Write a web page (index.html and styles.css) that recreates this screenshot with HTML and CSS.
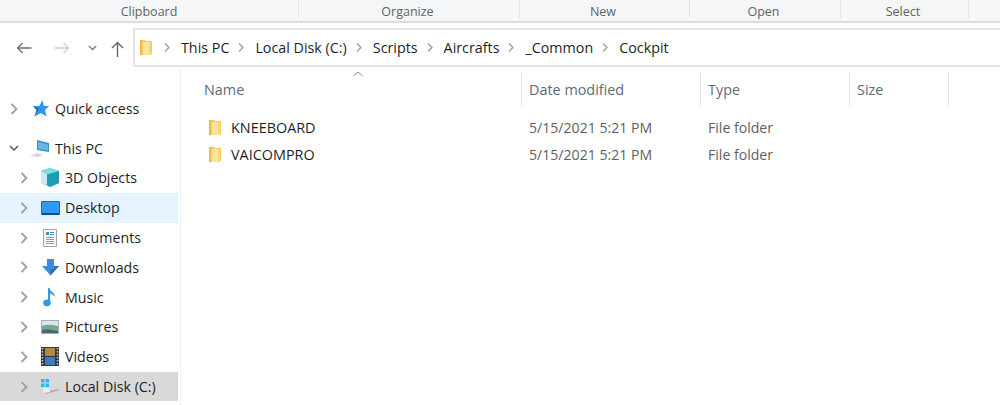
FILE: index.html
```html
<!DOCTYPE html>
<html lang="en">
<head>
    <meta charset="UTF-8">
    <title>Cockpit</title>
    <link rel="stylesheet" href="styles.css">
</head>
<body>

<svg class="defs" width="0" height="0">
    <symbol id="folder" viewBox="0 0 12 17">
        <path d="M0 1h5l1 1h6v13H0z" fill="#f5cb5c"/>
        <path d="M2 3h9v13H2z" fill="#fce598"/>
        <path d="M9 3h2v13H9z" fill="#f8d878"/>
        <path d="M0 1h2.500v15H0z" fill="#efbd42"/>
    </symbol>
    <symbol id="chevron" viewBox="0 0 10 14">
        <path d="M2.5 2l5 5-5 5" fill="none" stroke="#a0a0a0" stroke-width="1.8"/>
    </symbol>
</svg>

<div class="ribbon">
    <div class="tab tab-clipboard">Clipboard</div>
    <div class="tab">Organize</div>
    <div class="tab">New</div>
    <div class="tab">Open</div>
    <div class="tab">Select</div>
</div>

<div class="navbar">
    <div class="nav-buttons">
        <svg width="16" height="12" viewBox="0 0 16 12"><path d="M15.5 6H1.5M6.5 1l-5 5 5 5" fill="none" stroke="#707070" stroke-width="1.3"/></svg>
        <svg class="nav-forward" width="16" height="12" viewBox="0 0 16 12"><path d="M.5 6h14M9.5 1l5 5-5 5" fill="none" stroke="#d0d0d0" stroke-width="1.3"/></svg>
        <svg class="nav-recent" width="9" height="6" viewBox="0 0 9 6"><path d="M.8 1l3.700 3.500L8.200 1" fill="none" stroke="#808080" stroke-width="1.4"/></svg>
        <svg class="nav-up" width="13" height="16" viewBox="0 0 13 16"><path d="M6.500 16V1.500M1 7l5.500-5.500L12 7" fill="none" stroke="#666" stroke-width="1.4"/></svg>
    </div>
    <div class="address">
        <svg width="12" height="17"><use href="#folder"/></svg>
        <svg class="crumb-sep first" width="8" height="11"><use href="#chevron"/></svg>
        <span>This PC</span>
        <svg class="crumb-sep" width="8" height="11"><use href="#chevron"/></svg>
        <span>Local Disk (C:)</span>
        <svg class="crumb-sep" width="8" height="11"><use href="#chevron"/></svg>
        <span>Scripts</span>
        <svg class="crumb-sep" width="8" height="11"><use href="#chevron"/></svg>
        <span>Aircrafts</span>
        <svg class="crumb-sep" width="8" height="11"><use href="#chevron"/></svg>
        <span>_Common</span>
        <svg class="crumb-sep" width="8" height="11"><use href="#chevron"/></svg>
        <span>Cockpit</span>
    </div>
</div>

<div class="main">
    <div class="sidebar">
        <div class="tree-item root quick">
            <svg class="arrow" width="10" height="14"><use href="#chevron"/></svg>
            <div class="slot"><svg width="17" height="17" viewBox="0 0 18 18"><path d="M11 0l1.500 6 5.500.5-4.300 4.200L15.500 17.500 9.500 13.700 2.500 17.500l2.500-6.800L1 6.700 8 6z" fill="#2f95e6"/><path d="M2.500 17.500l2.500-6.800L1 6.700l6 2.300z" fill="#1c5f9e"/></svg></div>
            <span>Quick access</span>
        </div>
        <div class="tree-item root">
            <svg class="arrow" width="10" height="10" viewBox="0 0 10 10"><path d="M1 3l4 4 4-4" fill="none" stroke="#555" stroke-width="1.5"/></svg>
            <div class="slot"><svg width="20" height="18" viewBox="0 0 20 18"><path d="M7 1l12 3v9L7 11z" fill="#3c93c9"/><path d="M8 3l10 2.500v6L8 9.500z" fill="#64b8e4"/><path d="M0 17l7-3 6 2-5 2z" fill="#d5d8da"/></svg></div>
            <span>This PC</span>
        </div>
        <div class="tree-item">
            <svg class="arrow" width="10" height="14"><use href="#chevron"/></svg>
            <div class="slot"><svg width="20" height="19" viewBox="0 0 20 19"><path d="M10 0l9 3v12l-9 4-9-4V3z" fill="#52c5d4"/><path d="M1 3l6 3v11l-6-2z" fill="#c3eef2"/><path d="M1 3l7 3.500L19 3l-9-3z" fill="#7fdbe4"/><path d="M7 6.500V17l3 2 9-4V3z" fill="#1d9cb4"/></svg></div>
            <span>3D Objects</span>
        </div>
        <div class="tree-item selected">
            <svg class="arrow" width="10" height="14"><use href="#chevron"/></svg>
            <div class="slot"><svg width="19" height="14" viewBox="0 0 19 14"><rect width="19" height="14" rx="1" fill="#1b6fb8"/><rect x="1" y="1" width="17" height="11" fill="#2f9bf0"/><path d="M1 12h17v2H1z" fill="#0f4e88"/></svg></div>
            <span>Desktop</span>
        </div>
        <div class="tree-item">
            <svg class="arrow" width="10" height="14"><use href="#chevron"/></svg>
            <div class="slot"><svg width="14" height="18" viewBox="0 0 14 18"><path d="M.5.5h13v17H.5z" fill="#f6f7f8" stroke="#a5a5a5"/><path d="M3 3h3v3H3z" fill="#4a90c4"/><path d="M7 3.500h4M7 5.500h4" stroke="#4a90c4"/><path d="M3 8.500h8M3 10.500h8M3 12.500h8M3 14.500h8" stroke="#8fa3b5"/></svg></div>
            <span>Documents</span>
        </div>
        <div class="tree-item">
            <svg class="arrow" width="10" height="14"><use href="#chevron"/></svg>
            <div class="slot"><svg width="17" height="17" viewBox="0 0 17 17"><path d="M5 0h7v7h5l-8.500 9.500L0 7h5z" fill="#3b8ce0"/><path d="M8.500 10H12V7h5l-8.500 9.500z" fill="#2b6cb8"/></svg></div>
            <span>Downloads</span>
        </div>
        <div class="tree-item">
            <svg class="arrow" width="10" height="14"><use href="#chevron"/></svg>
            <div class="slot"><svg width="14" height="20" viewBox="0 0 14 20"><path d="M5 1h1.500c.5 3.500 5 4.500 6 9-1.500-2-4-3-5.500-3.500V16H5z" fill="#2f9ed8"/><ellipse cx="4" cy="15.800" rx="3.800" ry="3.400" fill="#2f9ed8"/></svg></div>
            <span>Music</span>
        </div>
        <div class="tree-item">
            <svg class="arrow" width="10" height="14"><use href="#chevron"/></svg>
            <div class="slot"><svg width="18" height="14" viewBox="0 0 18 14"><rect width="18" height="14" fill="#a8adb3"/><rect x="1" y="1" width="16" height="12" fill="#d5e8f2"/><path d="M1 6c5-2 10-1 16 0v7H1z" fill="#7fa588"/><path d="M1 10c6-1 10 0 16 1v2H1z" fill="#3f6d80"/></svg></div>
            <span>Pictures</span>
        </div>
        <div class="tree-item">
            <svg class="arrow" width="10" height="14"><use href="#chevron"/></svg>
            <div class="slot"><svg width="18" height="19" viewBox="0 0 18 19"><rect width="18" height="19" fill="#33383f"/><rect x="4" y="1" width="10" height="8" fill="#b58a3c"/><rect x="4" y="10" width="10" height="8" fill="#3f79c8"/><path d="M1.500 1v17M16.500 1v17" stroke="#c8c8c8" stroke-width="1.500" stroke-dasharray="1.500 1.500"/></svg></div>
            <span>Videos</span>
        </div>
        <div class="tree-item current">
            <svg class="arrow" width="10" height="14"><use href="#chevron"/></svg>
            <div class="slot"><svg width="20" height="17" viewBox="0 0 20 17"><path d="M1 1h3.500v3.500H1zM5.500 1H9v3.500H5.500zM1 5.500h3.500V9H1zM5.500 5.500H9V9H5.500z" fill="#1fc0e8"/><path d="M4 14l14-3 2 1-14 4z" fill="#b0b0b0"/><path d="M3 10h6l1 4-6 1z" fill="#f0f0f0"/></svg></div>
            <span>Local Disk (C:)</span>
        </div>
    </div>

    <div class="content">
        <div class="sort-caret">
            <svg width="10" height="6" viewBox="0 0 10 6"><path d="M.5 5L5 1l4.500 4" fill="none" stroke="#8a8a8a"/></svg>
        </div>
        <div class="row header">
            <div class="col">Name</div>
            <div class="col">Date modified</div>
            <div class="col">Type</div>
            <div class="col">Size</div>
        </div>
        <div class="row file">
            <div class="col name"><svg width="12" height="17"><use href="#folder"/></svg>KNEEBOARD</div>
            <div class="col">5/15/2021 5:21 PM</div>
            <div class="col">File folder</div>
            <div class="col"></div>
        </div>
        <div class="row file">
            <div class="col name"><svg width="12" height="17"><use href="#folder"/></svg>VAICOMPRO</div>
            <div class="col">5/15/2021 5:21 PM</div>
            <div class="col">File folder</div>
            <div class="col"></div>
        </div>
    </div>
</div>

</body>
</html>
```

FILE: styles.css
```css
* {
    box-sizing: border-box;
}
html, body {
    height: 100%;
}
body {
    margin: 0;
    overflow: hidden;
    background-color: #fff;
    color: #1f1f1f;
    font-family: "Open Sans", "Noto Sans", sans-serif;
    font-size: 14px;
}
.defs {
    display: block;
    height: 0;
}

/* ribbon */
.ribbon {
    display: grid;
    grid-template-columns: 299px 221px 170px 151px 128px;
    height: 23px;
    background-color: #f5f6f7;
    border-bottom: 2px solid #dcdcdc;
    color: #5f6368;
    font-size: 12.5px;
    text-align: center;
}
.tab {
    height: 18px;
    line-height: 23px;
    padding-right: 3px;
    border-right: 1px solid #e4e4e4;
}
.tab-clipboard {
    padding-right: 0;
}

/* address bar */
.navbar {
    display: flex;
    height: 39px;
    margin-top: 5px;
}
.nav-buttons {
    width: 133px;
    flex-shrink: 0;
    display: flex;
    align-items: center;
    padding-left: 16px;
}
.nav-forward {
    margin-left: 22px;
}
.nav-recent {
    margin-left: 18px;
}
.nav-up {
    margin-left: 14px;
    margin-top: 3px;
}
.address {
    flex: 1;
    display: flex;
    align-items: center;
    padding-left: 5px;
    border: 2px solid #e4e4e4;
    border-right: 0;
    font-size: 14.3px;
}
.crumb-sep {
    margin: 0 10px 0 8px;
}
.crumb-sep.first {
    margin-left: 11px;
}

/* layout under the bar */
.main {
    display: flex;
    height: 338px;
}
.sidebar {
    width: 181px;
    flex-shrink: 0;
    padding-top: 27px;
    border-right: 1px solid #f2f2f2;
    font-size: 14.2px;
}
.tree-item {
    width: 178px;
    height: 29.8px;
    display: flex;
    align-items: center;
    padding-left: 19px;
    white-space: nowrap;
}
.tree-item.root {
    padding-left: 9px;
}
.tree-item.quick {
    margin-bottom: 9.5px;
}
.tree-item.selected {
    background-color: #e5f3ff;
}
.tree-item.current {
    background-color: #d9d9d9;
}
.arrow {
    margin-right: 11px;
}
.slot {
    width: 20px;
    margin-right: 5px;
    display: flex;
    align-items: center;
    justify-content: center;
}

/* file list */
.content {
    position: relative;
    flex: 1;
    padding-top: 5px;
}
.sort-caret {
    position: absolute;
    left: 172px;
    top: 4px;
    line-height: 0;
}
.row {
    display: grid;
    grid-template-columns: 341px 179px 149px 99px;
}
.row .col {
    padding-left: 7px;
    white-space: nowrap;
}
.row .col:first-child {
    padding-left: 23px;
}
.header {
    height: 34px;
    margin-bottom: 8px;
    color: #5d6b7a;
    font-size: 14.4px;
}
.header .col {
    line-height: 35px;
    border-right: 1px solid #e8e8e8;
}
.file {
    height: 27px;
    line-height: 27px;
    color: #5f5f5f;
    font-size: 14.1px;
}
.file .col.name {
    display: flex;
    align-items: center;
    gap: 10px;
    padding-left: 28px;
    color: #1f1f1f;
    font-size: 14.4px;
}
```
